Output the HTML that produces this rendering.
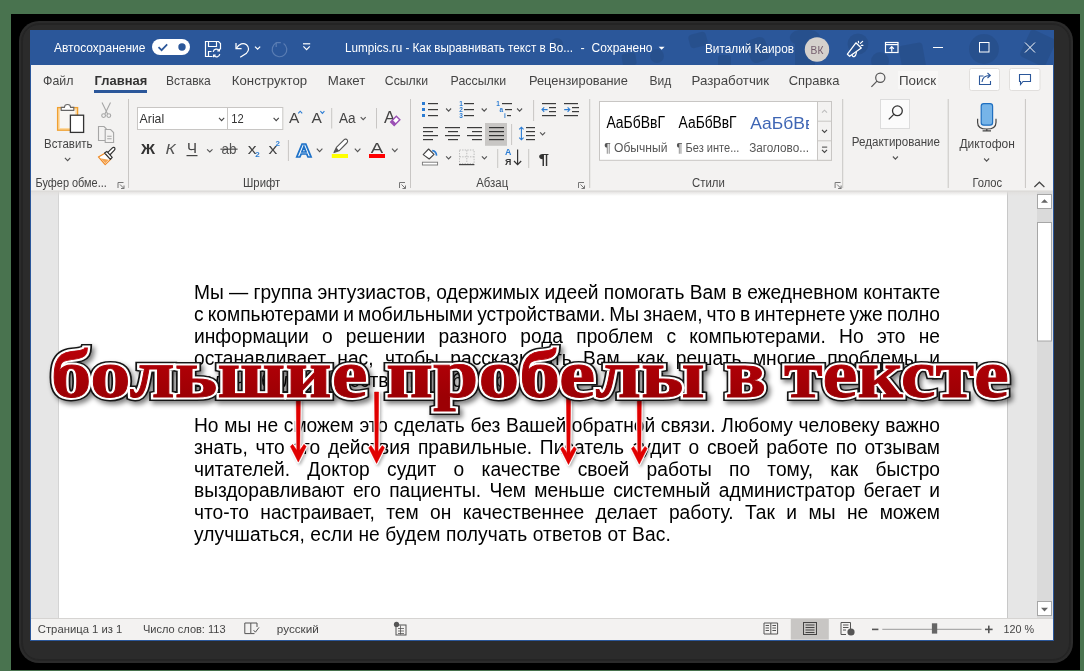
<!DOCTYPE html>
<html><head><meta charset="utf-8">
<style>
*{margin:0;padding:0;box-sizing:border-box}
html{will-change:transform}
html,body{width:1084px;height:671px;overflow:hidden;background:#49734f;font-family:"Liberation Sans",sans-serif}
.a{position:absolute}
svg{position:absolute;left:0;top:0;overflow:visible}
#blk{left:11px;top:14px;width:1069px;height:656px;background:#000}
#frame{left:19px;top:21px;width:1053.5px;height:641.5px;background:#2b2b2b;border-radius:20px}
.ring{border:1px solid #242424}
#win{left:30px;top:30px;width:1024px;height:611px;background:#f3f2f1;border:1px solid #2b579a;border-top:0}
#title{left:30px;top:30px;width:1024px;height:35px;background:#2b579a;overflow:hidden}
#doc{left:31px;top:191px;width:1022px;height:427px;background:#e6e6e6}
#page{left:58px;top:191px;width:950px;height:427px;background:#fff;border-right:1px solid #c8c8c8;border-left:1px solid #d4d4d4}
.ln{position:absolute;left:194px;width:746px;font-size:19.2px;line-height:22px;color:#000;white-space:nowrap;text-align:justify;text-align-last:justify;transform:scaleY(1.06);transform-origin:0 17px}
.ln.l{text-align-last:left}
#status{left:31px;top:618px;width:1022px;height:22px;background:#f3f2f1;border-top:1px solid #d6d4d2}
</style></head>
<body>
<div id="blk" class="a"></div>
<div id="frame" class="a"></div><div class="a ring" style="left:20.5px;top:22.5px;width:1050.5px;height:638.5px;border-radius:18.5px"></div><div class="a ring" style="left:22px;top:24px;width:1047.5px;height:635.5px;border-radius:17px"></div>
<div id="win" class="a"></div>
<div id="title" class="a"></div>
<div id="doc" class="a"></div>
<div id="page" class="a"></div>
<div class="a" style="left:31px;top:191px;width:1022px;height:5px;background:linear-gradient(#e0dedc,rgba(255,255,255,0))"></div>
<div class="ln" style="top:282.40px">Мы — группа энтузиастов, одержимых идеей помогать Вам в ежедневном контакте</div><div class="ln" style="top:304.25px;word-spacing:-1.4px">с компьютерами и мобильными устройствами. Мы знаем, что в интернете уже полно</div><div class="ln" style="top:326.10px">информации о решении разного рода проблем с компьютерами. Но это не</div><div class="ln" style="top:347.95px">останавливает нас, чтобы рассказывать Вам, как решать многие проблемы и</div><div class="ln l" style="top:369.80px">задачи более качественно и быстрее.</div><div class="ln" style="top:415.00px">Но мы не сможем это сделать без Вашей обратной связи. Любому человеку важно</div><div class="ln" style="top:436.75px">знать, что его действия правильные. Писатель судит о своей работе по отзывам</div><div class="ln" style="top:458.50px">читателей. Доктор судит о качестве своей работы по тому, как быстро</div><div class="ln" style="top:480.25px">выздоравливают его пациенты. Чем меньше системный администратор бегает и</div><div class="ln" style="top:502.00px">что-то настраивает, тем он качественнее делает работу. Так и мы не можем</div><div class="ln l" style="top:523.75px;letter-spacing:0.11px">улучшаться, если не будем получать ответов от Вас.</div>
<svg width="1084" height="671" viewBox="0 0 1084 671">
<defs><filter id="ash" x="-100%" y="-10%" width="300%" height="130%"><feGaussianBlur stdDeviation="1.5"/></filter></defs>
<path d="M296.20,400.00 L300.40,400.00 L299.80,450.30 L304.00,444.30 L306.20,446.50 L298.30,462.10 L290.40,446.50 L292.60,444.30 L296.80,450.30 Z M374.50,392.00 L378.70,392.00 L378.10,451.60 L382.30,445.60 L384.50,447.80 L376.60,463.40 L368.70,447.80 L370.90,445.60 L375.10,451.60 Z M566.40,395.00 L570.60,395.00 L570.00,452.70 L574.20,446.70 L576.40,448.90 L568.50,464.50 L560.60,448.90 L562.80,446.70 L567.00,452.70 Z M637.20,398.00 L641.40,398.00 L640.80,452.40 L645.00,446.40 L647.20,448.60 L639.30,464.20 L631.40,448.60 L633.60,446.40 L637.80,452.40 Z" fill="#000" opacity=".3" stroke="#000" stroke-width="2.5" stroke-linejoin="round" transform="translate(1.5,1.5)" filter="url(#ash)"/>
<path d="M296.20,400.00 L300.40,400.00 L299.80,450.30 L304.00,444.30 L306.20,446.50 L298.30,462.10 L290.40,446.50 L292.60,444.30 L296.80,450.30 Z M374.50,392.00 L378.70,392.00 L378.10,451.60 L382.30,445.60 L384.50,447.80 L376.60,463.40 L368.70,447.80 L370.90,445.60 L375.10,451.60 Z M566.40,395.00 L570.60,395.00 L570.00,452.70 L574.20,446.70 L576.40,448.90 L568.50,464.50 L560.60,448.90 L562.80,446.70 L567.00,452.70 Z M637.20,398.00 L641.40,398.00 L640.80,452.40 L645.00,446.40 L647.20,448.60 L639.30,464.20 L631.40,448.60 L633.60,446.40 L637.80,452.40 Z" fill="#fff" stroke="#fff" stroke-width="2.8" stroke-linejoin="round"/>
<path d="M296.20,400.00 L300.40,400.00 L299.80,450.30 L304.00,444.30 L306.20,446.50 L298.30,462.10 L290.40,446.50 L292.60,444.30 L296.80,450.30 Z M374.50,392.00 L378.70,392.00 L378.10,451.60 L382.30,445.60 L384.50,447.80 L376.60,463.40 L368.70,447.80 L370.90,445.60 L375.10,451.60 Z M566.40,395.00 L570.60,395.00 L570.00,452.70 L574.20,446.70 L576.40,448.90 L568.50,464.50 L560.60,448.90 L562.80,446.70 L567.00,452.70 Z M637.20,398.00 L641.40,398.00 L640.80,452.40 L645.00,446.40 L647.20,448.60 L639.30,464.20 L631.40,448.60 L633.60,446.40 L637.80,452.40 Z" fill="#e00000" stroke="#e00000" stroke-width="0.5" stroke-linejoin="round"/>
</svg>
<svg class="a" style="left:0;top:0" width="1084" height="671" viewBox="0 0 1084 671">
<defs>
<linearGradient id="rg" x1="0" y1="-50" x2="0" y2="0" gradientUnits="userSpaceOnUse"><stop offset="0" stop-color="#ba0008"/><stop offset="1" stop-color="#9c0004"/></linearGradient>
<filter id="tsh" x="-5%" y="-30%" width="110%" height="160%"><feGaussianBlur stdDeviation="2.6"/></filter>
</defs>
<g font-family="Liberation Serif" font-weight="bold" font-size="68" stroke-linejoin="miter" stroke-miterlimit="2.5">
<g transform="translate(2.5,3)" filter="url(#tsh)" opacity=".5"><text transform="translate(51,397.1) scale(1.185,1.0)" fill="#000" stroke="#000" stroke-width="8.0">большие</text><text transform="translate(386,397.1) scale(1.2006,1.0)" fill="#000" stroke="#000" stroke-width="8.0">пробелы</text><text transform="translate(725.5,397.1) scale(1.104,1.0)" fill="#000" stroke="#000" stroke-width="8.0">в</text><text transform="translate(784,397.1) scale(1.155,1.0)" fill="#000" stroke="#000" stroke-width="8.0">тексте</text></g>
<text transform="translate(51,397.1) scale(1.185,1.0)" fill="#151515" stroke="#151515" stroke-width="7.8">большие</text><text transform="translate(386,397.1) scale(1.2006,1.0)" fill="#151515" stroke="#151515" stroke-width="7.8">пробелы</text><text transform="translate(725.5,397.1) scale(1.104,1.0)" fill="#151515" stroke="#151515" stroke-width="7.8">в</text><text transform="translate(784,397.1) scale(1.155,1.0)" fill="#151515" stroke="#151515" stroke-width="7.8">тексте</text>
<text transform="translate(51,397.1) scale(1.185,1.0)" fill="#fff" stroke="#fff" stroke-width="4.8">большие</text><text transform="translate(386,397.1) scale(1.2006,1.0)" fill="#fff" stroke="#fff" stroke-width="4.8">пробелы</text><text transform="translate(725.5,397.1) scale(1.104,1.0)" fill="#fff" stroke="#fff" stroke-width="4.8">в</text><text transform="translate(784,397.1) scale(1.155,1.0)" fill="#fff" stroke="#fff" stroke-width="4.8">тексте</text>
<text transform="translate(51,397.1) scale(1.185,1.0)" fill="url(#rg)" stroke="url(#rg)" stroke-width="0.8">большие</text><text transform="translate(386,397.1) scale(1.2006,1.0)" fill="url(#rg)" stroke="url(#rg)" stroke-width="0.8">пробелы</text><text transform="translate(725.5,397.1) scale(1.104,1.0)" fill="url(#rg)" stroke="url(#rg)" stroke-width="0.8">в</text><text transform="translate(784,397.1) scale(1.155,1.0)" fill="url(#rg)" stroke="url(#rg)" stroke-width="0.8">тексте</text>
</g>
</svg>
<div id="status" class="a"></div>
<svg width="1084" height="671" viewBox="0 0 1084 671" font-family="Liberation Sans"><clipPath id="tbc"><rect x="30" y="30" width="1024" height="35"/></clipPath><g fill="#000" opacity="0.075" clip-path="url(#tbc)"><circle cx="657" cy="56" r="7"/><rect x="689" y="33" width="18" height="14" rx="4" transform="rotate(-15 698 40)"/><rect x="718" y="55" width="13" height="12" rx="3"/><rect x="748" y="38" width="20" height="24" rx="6" transform="rotate(-20 758 50)"/><path d="M795,65 V44 C785,40 790,28 805,30 C820,28 825,40 815,44 V65 Z"/><circle cx="858" cy="44" r="10.5"/><circle cx="880" cy="61" r="9"/><rect x="900" y="44" width="24" height="26" rx="3" transform="rotate(-10 912 55)"/><circle cx="984" cy="49" r="15"/><rect x="1024" y="33" width="28" height="30" rx="4" transform="rotate(25 1038 48)"/><circle cx="557" cy="44" r="6"/><rect x="622" y="53" width="14" height="13" rx="3" transform="rotate(-10 629 59)"/></g><text x="54" y="52" font-size="12.5" fill="#fff" textLength="91.5" lengthAdjust="spacingAndGlyphs" >Автосохранение</text><rect x="152" y="39" width="38" height="16" rx="8" fill="#fff"/><polyline points="158.5,47.2 161.6,50.2 167.2,44.4" fill="none" stroke="#2b579a" stroke-width="1.7"/><circle cx="182" cy="47" r="3.7" fill="#2b579a"/><g fill="none" stroke="#fff" stroke-width="1.2"><path d="M212.5,56.5 H205.5 V41.5 H218.5 L220.5,43.5 V49.5"/><path d="M208.5,41.5 V46.5 H216.5 V41.5"/><path d="M208.5,56.5 V51.5 H211.5"/><path d="M213.2,51.8 A3.3,3.3 0 0 1 219.2,50.6 M219.8,54.2 A3.3,3.3 0 0 1 213.8,55.4"/><path d="M219.4,48.8 V50.9 H217.3 M213.6,57.2 V55.1 H215.7"/></g><g fill="none" stroke="#fff" stroke-width="1.25"><path d="M236,43 V48.6 H241.6"/><path d="M236.4,48.2 C239,43.5 243.5,42.5 246.5,44.8 C249.5,47.3 249,50.5 246.5,53.2 L240.2,57.2"/><polyline points="255,46.6 257.6,49.2 260.2,46.6"/></g><g fill="none" stroke="#5a7db3" stroke-width="1.2"><path d="M276.5,42.8 A7.3,7.3 0 1 0 283.6,43.4"/><path d="M276.2,42.2 V47 M276.2,42.6 H280.8" /></g><g fill="none" stroke="#fff" stroke-width="1.2"><path d="M303,43.8 H310.2"/><polyline points="303.4,46.4 306.6,49.6 309.8,46.4"/></g><text x="345" y="52" font-size="12.5" fill="#fff" textLength="228" lengthAdjust="spacingAndGlyphs" >Lumpics.ru - Как выравнивать текст в Во...</text><text x="580.5" y="52" font-size="12.5" fill="#fff" >-</text><text x="591.5" y="52" font-size="12.5" fill="#fff" textLength="61" lengthAdjust="spacingAndGlyphs" >Сохранено</text><polygon points="658.6,46.8 664.6,46.8 661.6,49.8" fill="#fff"/><text x="705" y="52.5" font-size="12.5" fill="#fff" textLength="89" lengthAdjust="spacingAndGlyphs" >Виталий Каиров</text><circle cx="817" cy="49.5" r="12.2" fill="#d5d1cd"/><text x="810.6" y="53.8" font-size="11" fill="#735c6c" textLength="12.8" lengthAdjust="spacingAndGlyphs" >ВК</text><g fill="none" stroke="#fff" stroke-width="1.25" stroke-linejoin="round" stroke-linecap="round"><path d="M847.4,54.2 L855.9,42.8 L861.3,48 L849.6,56.3 Z"/><path d="M852.2,55.2 C852.6,57.6 855.6,57.4 856.4,52.6"/><path d="M858.4,41.4 L858.6,42.6 M860.4,43.4 L862.6,41.4 M861.2,45.3 L862.9,45.3"/></g><g fill="none" stroke="#fff" stroke-width="1.2"><rect x="885.5" y="42.5" width="12.5" height="10"/><path d="M885.5,44.6 H898"/><path d="M891.75,51.8 V46.8 M889.6,48.8 L891.75,46.6 L893.9,48.8"/></g><g fill="none" stroke="#fff" stroke-width="1"><path d="M933,47.5 H943"/><rect x="979.5" y="42.5" width="9.5" height="9.5"/><path d="M1025,42.5 L1035,52.5 M1035,42.5 L1025,52.5"/></g><text x="43.0" y="85" font-size="13" fill="#444" textLength="30.4" lengthAdjust="spacingAndGlyphs" >Файл</text><text x="166.0" y="85" font-size="13" fill="#444" textLength="44.8" lengthAdjust="spacingAndGlyphs" >Вставка</text><text x="231.8" y="85" font-size="13" fill="#444" textLength="75.3" lengthAdjust="spacingAndGlyphs" >Конструктор</text><text x="327.79999999999995" y="85" font-size="13" fill="#444" textLength="37.6" lengthAdjust="spacingAndGlyphs" >Макет</text><text x="384.79999999999995" y="85" font-size="13" fill="#444" textLength="43.2" lengthAdjust="spacingAndGlyphs" >Ссылки</text><text x="450.59999999999997" y="85" font-size="13" fill="#444" textLength="55.5" lengthAdjust="spacingAndGlyphs" >Рассылки</text><text x="529.0" y="85" font-size="13" fill="#444" textLength="98.9" lengthAdjust="spacingAndGlyphs" >Рецензирование</text><text x="649.4" y="85" font-size="13" fill="#444" textLength="21.8" lengthAdjust="spacingAndGlyphs" >Вид</text><text x="691.5" y="85" font-size="13" fill="#444" textLength="77.6" lengthAdjust="spacingAndGlyphs" >Разработчик</text><text x="788.6999999999999" y="85" font-size="13" fill="#444" textLength="50.8" lengthAdjust="spacingAndGlyphs" >Справка</text><text x="94.6" y="85" font-size="13" fill="#333" textLength="52.6" lengthAdjust="spacingAndGlyphs" font-weight="bold" >Главная</text><rect x="94" y="90" width="53" height="3" fill="#2b579a"/><rect x="898" y="71" width="40" height="18" fill="#f8f7f6"/><g fill="none" stroke="#555" stroke-width="1.2"><circle cx="880.3" cy="77.8" r="4.6"/><path d="M877,81.2 L871.4,86.8"/></g><text x="899" y="85" font-size="13" fill="#444" textLength="37" lengthAdjust="spacingAndGlyphs" >Поиск</text><rect x="969.5" y="68.5" width="30" height="22" rx="2" fill="#fff" stroke="#e1dfdd"/><rect x="1009.5" y="68.5" width="30.5" height="22" rx="2" fill="#fff" stroke="#e1dfdd"/><g fill="none" stroke="#2b579a" stroke-width="1.1"><path d="M983.5,76 H979.5 V84.5 H990.5 V81"/><path d="M982,82 C982.5,77.5 985.5,75.5 989.5,75.5 M987.5,73 L990.3,75.5 L987.5,78"/></g><g fill="none" stroke="#2b579a" stroke-width="1.1"><path d="M1019.5,74.5 H1030.5 V81.5 H1023 L1020.5,84.5 V81.5 H1019.5 Z"/></g></svg>
<svg width="1084" height="671" viewBox="0 0 1084 671" font-family="Liberation Sans"><rect x="128.0" y="99" width="1" height="89" fill="#c8c6c4"/><rect x="410.0" y="99" width="1" height="89" fill="#c8c6c4"/><rect x="589.2" y="99" width="1" height="89" fill="#c8c6c4"/><rect x="842.2" y="99" width="1" height="89" fill="#c8c6c4"/><rect x="947.7" y="99" width="1" height="89" fill="#c8c6c4"/><rect x="1024.9" y="99" width="1" height="89" fill="#c8c6c4"/><rect x="57.6" y="107.6" width="20" height="22.6" fill="#fdd9a0" stroke="#f0a030" stroke-width="1.3"/><rect x="59.8" y="109.8" width="15.6" height="18.2" fill="#f8f6f3"/><path d="M61.2,110.4 V107.4 H64.4 C64.6,103.6 70.4,103.6 70.6,107.4 H73.8 V110.4 Z" fill="#fff" stroke="#666" stroke-width="1.1"/><rect x="70.4" y="115.2" width="13.2" height="17.2" fill="#fff" stroke="#333" stroke-width="1.3"/><text x="44" y="147.5" font-size="12.5" fill="#444" textLength="48.5" lengthAdjust="spacingAndGlyphs" >Вставить</text><polyline points="64.9,157.8 67.6,160.6 70.3,157.8" fill="none" stroke="#555" stroke-width="1.1"/><g fill="none" stroke="#a6a6a6" stroke-width="1.1"><path d="M102,102.5 L107.6,114 M110.5,102.5 L104.9,114"/><circle cx="103.6" cy="115.6" r="1.9"/><circle cx="108.8" cy="115.6" r="1.9"/></g><g fill="#f3f2f1" stroke="#a6a6a6" stroke-width="1.1"><path d="M105,140.5 H98.5 V126.5 H104 L106.5,129"/><path d="M105.2,142.5 V129.5 H110.6 L113.6,132.5 V142.5 Z"/><path d="M107.2,136.2 H111.6 M107.2,138.8 H111.6" /></g><path d="M98.4,156.9 L104.9,153.2 L110.6,159.4 L105.2,164.6 Z" fill="#fff" stroke="#f08a24" stroke-width="1.2" stroke-linejoin="round"/><path d="M100,158.2 L108.8,159.8 L105.3,163.2 Z" fill="#f4a553"/><path d="M107.6,152.6 L112.4,147.8 C113.2,147 114.4,147.2 114.8,148 C115.2,148.8 115,149.6 114.4,150.2 L109.8,155" fill="#fff" stroke="#333" stroke-width="1.2" stroke-linejoin="round"/><path d="M104.6,153 L106.8,151.4 L112.2,157.4 L110.4,159.4 Z" fill="#fff" stroke="#333" stroke-width="1.2" stroke-linejoin="round"/><text x="35.6" y="186.8" font-size="12" fill="#444" textLength="71.2" lengthAdjust="spacingAndGlyphs" >Буфер обме...</text><g fill="none" stroke="#777" stroke-width="1"><path d="M118.0,188 V182.5 H123.5"/><path d="M120.0,184.5 L124.0,188.5 M124.0,185.5 V188.5 H121.0"/></g><rect x="137.5" y="107.5" width="90" height="22" fill="#fff" stroke="#c8c6c4"/><rect x="227.5" y="107.5" width="55.3" height="22" fill="#fff" stroke="#c8c6c4"/><text x="139.6" y="123.2" font-size="13" fill="#333" textLength="24.6" lengthAdjust="spacingAndGlyphs" >Arial</text><text x="231.2" y="123.2" font-size="13" fill="#333" textLength="12.4" lengthAdjust="spacingAndGlyphs" >12</text><polyline points="219.0,117.8 221.6,120.6 224.2,117.8" fill="none" stroke="#444" stroke-width="1.1"/><polyline points="273.6,117.8 276.2,120.6 278.8,117.8" fill="none" stroke="#444" stroke-width="1.1"/><text x="289" y="123.2" font-size="15.5" fill="#444" >A</text><polyline points="298.2,113.4 300.2,111.2 302.2,113.4" fill="none" stroke="#2b7cd3" stroke-width="1.1"/><text x="311.4" y="123.2" font-size="15.5" fill="#444" >A</text><polyline points="320.4,111.2 322.4,113.4 324.4,111.2" fill="none" stroke="#2b7cd3" stroke-width="1.1"/><rect x="331.2" y="108" width="1" height="20.5" fill="#c8c6c4"/><text x="339" y="123.2" font-size="15.5" fill="#444" textLength="16.6" lengthAdjust="spacingAndGlyphs" >Aa</text><polyline points="360.7,117.1 363.2,119.7 365.7,117.1" fill="none" stroke="#555" stroke-width="1.1"/><rect x="376.0" y="108" width="1" height="20.5" fill="#c8c6c4"/><text x="384" y="123.2" font-size="17" fill="#444" >A</text><g transform="rotate(-45 395.2 120.8)"><rect x="391.2" y="118.4" width="8" height="5" fill="#fff" stroke="#9b4fb5" stroke-width="1.4"/><rect x="391.2" y="118.4" width="2.8" height="5" fill="#9b4fb5"/></g><text x="141" y="154" font-size="15" fill="#333" textLength="14" lengthAdjust="spacingAndGlyphs" font-weight="bold" >Ж</text><text x="165.5" y="154" font-size="15" fill="#555" textLength="10" lengthAdjust="spacingAndGlyphs" font-style="italic">К</text><text x="187" y="152.6" font-size="14" fill="#444" textLength="10" lengthAdjust="spacingAndGlyphs" >Ч</text><rect x="186.5" y="155" width="11" height="1.2" fill="#444"/><polyline points="207.1,149.3 209.8,151.9 212.5,149.3" fill="none" stroke="#555" stroke-width="1.1"/><text x="221.4" y="153.6" font-size="14.5" fill="#555" textLength="15" lengthAdjust="spacingAndGlyphs" >ab</text><rect x="220.4" y="148.6" width="17.2" height="1.1" fill="#444"/><text x="247.8" y="153.6" font-size="15" fill="#444" textLength="8.8" lengthAdjust="spacingAndGlyphs" >x</text><text x="255.2" y="157.2" font-size="8" fill="#2b7cd3" font-weight="bold" >2</text><text x="268.6" y="153.6" font-size="15" fill="#444" textLength="8.8" lengthAdjust="spacingAndGlyphs" >x</text><text x="275.6" y="145.6" font-size="8" fill="#2b7cd3" font-weight="bold" >2</text><rect x="287.9" y="140" width="1" height="21" fill="#c8c6c4"/><text x="296.2" y="156.6" font-size="19" font-weight="bold" fill="#fff" stroke="#1e72c8" stroke-width="1.6" textLength="15.4" lengthAdjust="spacingAndGlyphs">A</text><polyline points="316.8,148.7 319.6,151.7 322.4,148.7" fill="none" stroke="#555" stroke-width="1.1"/><path d="M334,152.6 L336.4,147.4 L344.2,139.6 C345.2,138.6 346.8,139.2 347.4,140.2 C348,141.4 347.6,142.2 346.8,143 L339,150.8 Z" fill="#fff" stroke="#555" stroke-width="1.1" stroke-linejoin="round"/><path d="M334,152.6 L336.4,147.4 L339,150.8 Z" fill="#555"/><rect x="331.8" y="154" width="16.2" height="4" fill="#ffff00"/><polyline points="354.8,148.7 357.6,151.7 360.4,148.7" fill="none" stroke="#555" stroke-width="1.1"/><text x="370.8" y="152.6" font-size="15" fill="#444" textLength="12.4" lengthAdjust="spacingAndGlyphs" >A</text><rect x="369" y="154" width="16" height="4" fill="#ff0000"/><polyline points="392.0,148.7 394.8,151.7 397.6,148.7" fill="none" stroke="#555" stroke-width="1.1"/><text x="243" y="186.8" font-size="12" fill="#444" textLength="37.2" lengthAdjust="spacingAndGlyphs" >Шрифт</text><g fill="none" stroke="#777" stroke-width="1"><path d="M399.5,188 V182.5 H405"/><path d="M401.5,184.5 L405.5,188.5 M405.5,185.5 V188.5 H402.5"/></g><rect x="422" y="102" width="3" height="3" fill="#2b7cd3"/><rect x="422" y="108" width="3" height="3" fill="#2b7cd3"/><rect x="422" y="114" width="3" height="3" fill="#2b7cd3"/><rect x="428" y="103" width="10" height="1.2" fill="#3c3c3c"/><rect x="428" y="109" width="10" height="1.2" fill="#3c3c3c"/><rect x="428" y="115" width="10" height="1.2" fill="#3c3c3c"/><polyline points="446.1,108.5 448.6,111.1 451.1,108.5" fill="none" stroke="#555" stroke-width="1.1"/><text x="459.2" y="106.4" font-size="6.5" fill="#2b7cd3" font-weight="bold" >1</text><text x="459.2" y="112.4" font-size="6.5" fill="#2b7cd3" font-weight="bold" >2</text><text x="459.2" y="118.2" font-size="6.5" fill="#2b7cd3" font-weight="bold" >3</text><rect x="464" y="103" width="10" height="1.2" fill="#3c3c3c"/><rect x="464" y="109" width="10" height="1.2" fill="#3c3c3c"/><rect x="464" y="115" width="10" height="1.2" fill="#3c3c3c"/><polyline points="481.7,108.5 484.2,111.1 486.7,108.5" fill="none" stroke="#555" stroke-width="1.1"/><text x="496.2" y="106.4" font-size="6.5" fill="#2b7cd3" font-weight="bold" >1</text><text x="499.6" y="112.2" font-size="6.5" fill="#2b7cd3" font-weight="bold" >a</text><text x="504" y="118.2" font-size="6.5" fill="#2b7cd3" font-weight="bold" >i</text><rect x="502" y="103" width="10" height="1.2" fill="#3c3c3c"/><rect x="505" y="109" width="7" height="1.2" fill="#3c3c3c"/><rect x="507" y="115" width="4" height="1.2" fill="#3c3c3c"/><polyline points="517.1,108.5 519.6,111.1 522.1,108.5" fill="none" stroke="#555" stroke-width="1.1"/><rect x="533.1" y="100" width="1" height="21" fill="#c8c6c4"/><rect x="542" y="103" width="14" height="1.2" fill="#3c3c3c"/><rect x="542" y="115" width="14" height="1.2" fill="#3c3c3c"/><rect x="549" y="107" width="7" height="1.2" fill="#3c3c3c"/><rect x="549" y="111" width="7" height="1.2" fill="#3c3c3c"/><g fill="none" stroke="#2b7cd3" stroke-width="1.1"><path d="M542,109.6 H547.6 M544.2,107.4 L542,109.6 L544.2,111.8"/></g><rect x="564" y="103" width="14" height="1.2" fill="#3c3c3c"/><rect x="564" y="115" width="14" height="1.2" fill="#3c3c3c"/><rect x="572" y="107" width="7" height="1.2" fill="#3c3c3c"/><rect x="572" y="111" width="7" height="1.2" fill="#3c3c3c"/><g fill="none" stroke="#2b7cd3" stroke-width="1.1"><path d="M564.2,109.6 H569.8 M567.6,107.4 L569.8,109.6 L567.6,111.8"/></g><rect x="423" y="127" width="15" height="1.2" fill="#3c3c3c"/><rect x="423" y="135" width="15" height="1.2" fill="#3c3c3c"/><rect x="423" y="131" width="10" height="1.2" fill="#3c3c3c"/><rect x="423" y="139" width="10" height="1.2" fill="#3c3c3c"/><rect x="445" y="127" width="15" height="1.2" fill="#3c3c3c"/><rect x="445" y="135" width="15" height="1.2" fill="#3c3c3c"/><rect x="448" y="131" width="10" height="1.2" fill="#3c3c3c"/><rect x="448" y="139" width="10" height="1.2" fill="#3c3c3c"/><rect x="467" y="127" width="15" height="1.2" fill="#3c3c3c"/><rect x="467" y="135" width="15" height="1.2" fill="#3c3c3c"/><rect x="472" y="131" width="10" height="1.2" fill="#3c3c3c"/><rect x="472" y="139" width="10" height="1.2" fill="#3c3c3c"/><rect x="485" y="123" width="22" height="22.8" fill="#c8c6c4"/><rect x="489" y="127" width="15" height="1.2" fill="#333"/><rect x="489" y="131" width="15" height="1.2" fill="#333"/><rect x="489" y="135" width="15" height="1.2" fill="#333"/><rect x="489" y="139" width="15" height="1.2" fill="#333"/><rect x="511.1" y="124" width="1" height="21" fill="#c8c6c4"/><g fill="none" stroke="#2b7cd3" stroke-width="1.1"><path d="M521.4,127.2 V139.8 M519.2,129.4 L521.4,127.2 L523.6,129.4 M519.2,137.6 L521.4,139.8 L523.6,137.6"/></g><rect x="526" y="127" width="9" height="1.2" fill="#3c3c3c"/><rect x="526" y="131" width="9" height="1.2" fill="#3c3c3c"/><rect x="526" y="135" width="9" height="1.2" fill="#3c3c3c"/><rect x="526" y="139" width="9" height="1.2" fill="#3c3c3c"/><polyline points="540.1,132.3 542.6,134.9 545.1,132.3" fill="none" stroke="#555" stroke-width="1.1"/><path d="M423.2,154.6 L428.6,149 L434,154.4 L429.2,159 Z" fill="#fff" stroke="#444" stroke-width="1.1" stroke-linejoin="round"/><path d="M432.2,150.6 C434.6,150.8 436.4,152.6 436.6,155.6" fill="none" stroke="#2b7cd3" stroke-width="1.6"/><rect x="422.4" y="162.2" width="15.2" height="2.8" fill="#fff" stroke="#777" stroke-width="0.9"/><polyline points="446.1,156.3 448.6,158.9 451.1,156.3" fill="none" stroke="#555" stroke-width="1.1"/><rect x="459.5" y="150" width="14.6" height="13.6" fill="none" stroke="#b8b8b8" stroke-width="0.9" stroke-dasharray="1.4,1.2"/><path d="M466.8,150.2 V163.4 M459.6,156.8 H474" stroke="#b8b8b8" stroke-width="0.9" stroke-dasharray="1.4,1.2"/><rect x="459" y="164" width="15.4" height="1.2" fill="#444"/><polyline points="481.9,156.3 484.4,158.9 486.9,156.3" fill="none" stroke="#555" stroke-width="1.1"/><rect x="497.2" y="149" width="1" height="19" fill="#c8c6c4"/><text x="505" y="155.4" font-size="8.8" fill="#2b7cd3" font-weight="bold" >A</text><text x="505" y="164.8" font-size="8.8" fill="#333" font-weight="bold" >Я</text><g fill="none" stroke="#333" stroke-width="1.2"><path d="M517.6,149.4 V164.6 M514,161 L517.6,164.6 L521.2,161"/></g><rect x="528.2" y="149" width="1" height="19" fill="#c8c6c4"/><text x="538.6" y="164" font-size="15" fill="#333" textLength="10.6" lengthAdjust="spacingAndGlyphs" font-weight="bold" >¶</text><text x="476.2" y="186.5" font-size="12" fill="#444" textLength="32" lengthAdjust="spacingAndGlyphs" >Абзац</text><g fill="none" stroke="#777" stroke-width="1"><path d="M578.5,188 V182.5 H584"/><path d="M580.5,184.5 L584.5,188.5 M584.5,185.5 V188.5 H581.5"/></g><rect x="599.5" y="101.5" width="232" height="58.8" fill="#fff" stroke="#c8c6c4"/><rect x="817.5" y="101.5" width="14" height="58.8" fill="#f3f2f1" stroke="#c8c6c4"/><rect x="817.5" y="121.2" width="14" height="19.6" fill="#f3f2f1" stroke="#c8c6c4"/><polyline points="822,112.6 824.5,110.2 827,112.6" fill="none" stroke="#bdbdbd" stroke-width="1.1"/><polyline points="822.0,129.9 824.5,132.5 827.0,129.9" fill="none" stroke="#444" stroke-width="1.1"/><rect x="822" y="146.6" width="5.2" height="1" fill="#444"/><polyline points="822.0,149.9 824.5,152.5 827.0,149.9" fill="none" stroke="#444" stroke-width="1.1"/><text x="606.4" y="128.4" font-size="16" fill="#000" textLength="58.6" lengthAdjust="spacingAndGlyphs" >АаБбВвГ</text><text x="678.6" y="128.4" font-size="16" fill="#000" textLength="58" lengthAdjust="spacingAndGlyphs" >АаБбВвГ</text><clipPath id="hc"><rect x="745" y="105" width="64" height="30"/></clipPath><g clip-path="url(#hc)"><text x="750.2" y="128.6" font-size="17" fill="#3f66b4" textLength="64" lengthAdjust="spacingAndGlyphs" >АаБбВв</text></g><text x="604.2" y="151.6" font-size="12" fill="#555" textLength="63.2" lengthAdjust="spacingAndGlyphs" >¶ Обычный</text><text x="676.6" y="151.6" font-size="12" fill="#555" textLength="62.8" lengthAdjust="spacingAndGlyphs" >¶ Без инте...</text><text x="749.2" y="151.6" font-size="12" fill="#555" textLength="59.8" lengthAdjust="spacingAndGlyphs" >Заголово...</text><text x="692" y="186.5" font-size="12" fill="#444" textLength="32.8" lengthAdjust="spacingAndGlyphs" >Стили</text><g fill="none" stroke="#777" stroke-width="1"><path d="M835.1,188 V182.5 H840.6"/><path d="M837.1,184.5 L841.1,188.5 M841.1,185.5 V188.5 H838.1"/></g><rect x="880.5" y="99.5" width="29" height="29" fill="#fbfbfb" stroke="#dcdcdc"/><g fill="none" stroke="#333" stroke-width="1.3"><circle cx="897.4" cy="110.8" r="4.9"/><path d="M893.8,114.4 L888.8,119.4"/></g><text x="851.8" y="145.8" font-size="12.5" fill="#444" textLength="88.2" lengthAdjust="spacingAndGlyphs" >Редактирование</text><polyline points="892.9,156.5 895.4,159.1 897.9,156.5" fill="none" stroke="#555" stroke-width="1.1"/><rect x="981.2" y="103.6" width="11.4" height="21.6" rx="2.6" fill="#76b4e8" stroke="#1f6fc0" stroke-width="1.2"/><path d="M977.6,118.8 V122.4 C977.6,126.6 980.6,129 986.8,129 C993,129 996,126.6 996,122.4 V118.8" fill="none" stroke="#444" stroke-width="1.2"/><path d="M986.8,129 V130.8 M982.6,130.8 H991" stroke="#444" stroke-width="1.2"/><text x="959.4" y="147.8" font-size="12.5" fill="#444" textLength="55.4" lengthAdjust="spacingAndGlyphs" >Диктофон</text><polyline points="984.1,158.5 986.6,161.1 989.1,158.5" fill="none" stroke="#555" stroke-width="1.1"/><text x="972.4" y="186.6" font-size="12" fill="#444" textLength="29.8" lengthAdjust="spacingAndGlyphs" >Голос</text><polyline points="1034.4,187 1039.4,182.2 1044.4,187" fill="none" stroke="#444" stroke-width="1.2"/><rect x="31" y="190.5" width="1022" height="1" fill="#dad8d6"/></svg>
<svg width="1084" height="671" viewBox="0 0 1084 671" font-family="Liberation Sans"><rect x="1037" y="192" width="15.5" height="426" fill="#dadada"/><rect x="1037.5" y="194.5" width="14" height="14" fill="#fff" stroke="#a6a6a6"/><polygon points="1041,202.8 1048,202.8 1044.5,199.2" fill="#666"/><rect x="1037.5" y="222.5" width="14" height="118.5" fill="#fff" stroke="#a6a6a6"/><rect x="1037.5" y="601.5" width="14" height="14" fill="#fff" stroke="#a6a6a6"/><polygon points="1041,607.8 1048,607.8 1044.5,611.4" fill="#666"/><text x="37.8" y="632.8" font-size="11.5" fill="#444" textLength="84.6" lengthAdjust="spacingAndGlyphs" >Страница 1 из 1</text><text x="143" y="632.8" font-size="11.5" fill="#444" textLength="82.6" lengthAdjust="spacingAndGlyphs" >Число слов: 113</text><g fill="none" stroke="#555" stroke-width="1"><path d="M244.8,623 H250.8 V633.6 H244.8 Z M250.8,623 H257 V627 M250.8,633.6 H254.5"/><path d="M253.6,630.2 L255.4,632.2 L259,627.4"/></g><text x="276.8" y="632.8" font-size="11.5" fill="#444" textLength="42" lengthAdjust="spacingAndGlyphs" >русский</text><rect x="396" y="625" width="10" height="10" fill="none" stroke="#555" stroke-width="1"/><path d="M398,628.5 H404 M398,631 H404 M398,633.5 H404 M400.5,625.5 V634.5" stroke="#555" stroke-width="0.8"/><circle cx="396.5" cy="624.4" r="2.6" fill="#555"/><rect x="790.8" y="619" width="38" height="20.6" fill="#c8c6c4"/><g fill="none" stroke="#555" stroke-width="1"><path d="M764,623 H770.8 V634 H764 Z M770.8,623 H777.6 V634 H770.8"/><path d="M765.6,625.5 H769 M765.6,628 H769 M765.6,630.5 H769 M772.4,625.5 H776 M772.4,628 H776 M772.4,630.5 H776"/></g><g fill="none" stroke="#444" stroke-width="1"><rect x="803.5" y="622.5" width="13" height="12"/><path d="M805.5,625 H814.5 M805.5,627.5 H814.5 M805.5,630 H814.5 M805.5,632.5 H814.5"/></g><g fill="none" stroke="#555" stroke-width="1"><path d="M850.5,631.5 V622.5 H841 V634.5 H846"/><path d="M843,625 H848.5 M843,627.5 H848.5 M843,630 H846"/></g><circle cx="851" cy="632" r="3.6" fill="#555"/><rect x="872" y="628.6" width="6.4" height="1.6" fill="#555"/><rect x="882.3" y="628.8" width="99.2" height="1" fill="#999"/><rect x="931.9" y="623.3" width="5.3" height="10.3" fill="#666"/><rect x="985" y="628.6" width="7.6" height="1.6" fill="#555"/><rect x="988" y="625.6" width="1.6" height="7.6" fill="#555"/><text x="1003.6" y="632.8" font-size="11.5" fill="#444" textLength="30.6" lengthAdjust="spacingAndGlyphs" >120 %</text></svg>
</body></html>
